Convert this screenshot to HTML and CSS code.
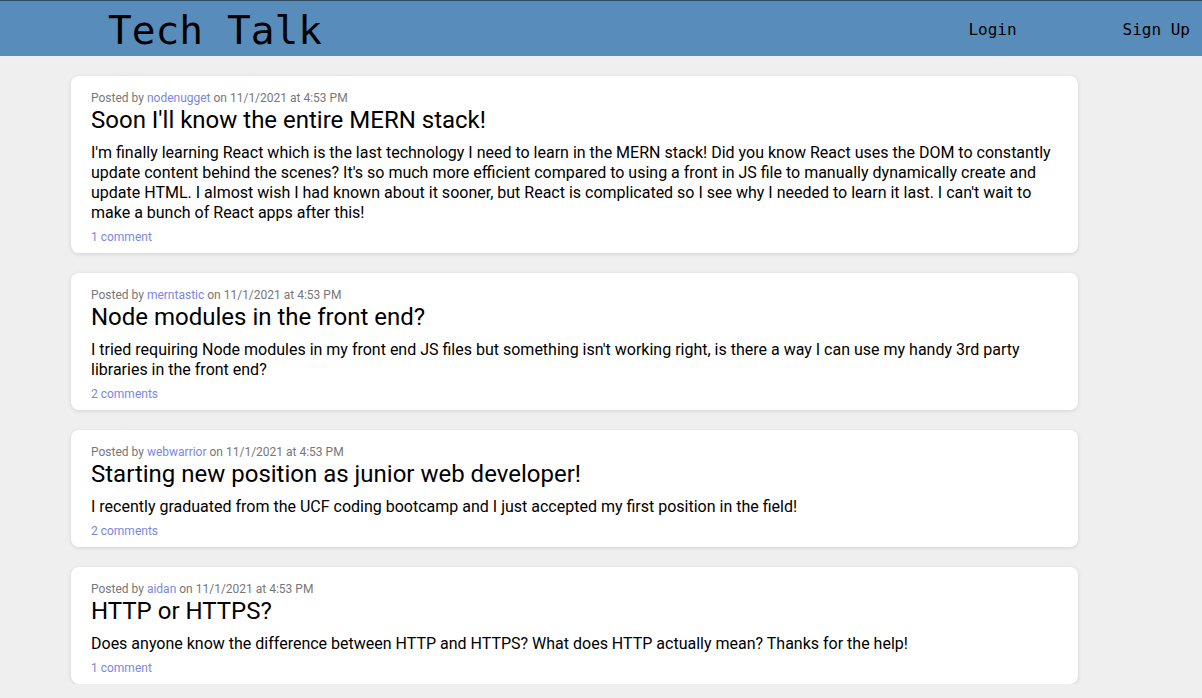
FILE: index.html
```html
<!DOCTYPE html>
<html>
<head>
<meta charset="utf-8">
<link rel="stylesheet" href="styles.css">
</head>
<body>
<header class="topbar">
  <h1 class="brand">Tech Talk</h1>
  <nav class="nav">
    <a class="nav-link" href="#">Login</a>
    <a class="nav-link" href="#">Sign Up</a>
  </nav>
</header>
<main class="feed">
  <article class="card">
    <div class="meta">Posted by <a class="user" href="#">nodenugget</a> on 11/1/2021 at 4:53 PM</div>
    <h2 class="title">Soon I'll know the entire MERN stack!</h2>
    <p class="body">I'm finally learning React which is the last technology I need to learn in the MERN stack! Did you know React uses the DOM to constantly update content behind the scenes? It's so much more efficient compared to using a front in JS file to manually dynamically create and update HTML. I almost wish I had known about it sooner, but React is complicated so I see why I needed to learn it last. I can't wait to make a bunch of React apps after this!</p>
    <a class="comments" href="#">1 comment</a>
  </article>
  <article class="card">
    <div class="meta">Posted by <a class="user" href="#">merntastic</a> on 11/1/2021 at 4:53 PM</div>
    <h2 class="title">Node modules in the front end?</h2>
    <p class="body">I tried requiring Node modules in my front end JS files but something isn't working right, is there a way I can use my handy 3rd party libraries in the front end?</p>
    <a class="comments" href="#">2 comments</a>
  </article>
  <article class="card">
    <div class="meta">Posted by <a class="user" href="#">webwarrior</a> on 11/1/2021 at 4:53 PM</div>
    <h2 class="title">Starting new position as junior web developer!</h2>
    <p class="body">I recently graduated from the UCF coding bootcamp and I just accepted my first position in the field!</p>
    <a class="comments" href="#">2 comments</a>
  </article>
  <article class="card">
    <div class="meta">Posted by <a class="user" href="#">aidan</a> on 11/1/2021 at 4:53 PM</div>
    <h2 class="title">HTTP or HTTPS?</h2>
    <p class="body">Does anyone know the difference between HTTP and HTTPS? What does HTTP actually mean? Thanks for the help!</p>
    <a class="comments" href="#">1 comment</a>
  </article>
</main>
</body>
</html>
```
FILE: styles.css
```css
html, body {
  margin: 0;
  padding: 0;
}
body {
  background: #efefef;
  font-family: Roboto, "Liberation Sans", sans-serif;
  color: #000;
}
.topbar {
  display: flex;
  align-items: center;
  justify-content: space-between;
  height: 55px;
  background: #588cba;
  border-top: 1px solid #2e4b64;
}
.brand {
  margin: 4px 0 0 108px;
  font-family: "DejaVu Sans Mono", monospace;
  font-weight: normal;
  font-size: 39.5px;
  line-height: 51px;
  color: #000;
}
.nav {
  display: flex;
  gap: 106px;
  padding-right: 12px;
  padding-top: 1px;
}
.nav-link {
  font-family: "DejaVu Sans Mono", monospace;
  font-size: 16px;
  color: #000;
  text-decoration: none;
}
.feed {
  display: flex;
  flex-direction: column;
  gap: 20px;
  width: 1007px;
  margin: 20px 0 0 71px;
}
.card {
  background: #fff;
  border-radius: 8px;
  box-shadow: 0 1px 4px rgba(0, 0, 0, 0.12);
  padding: 14px 20px 8px;
}
.meta {
  font-size: 12px;
  line-height: 16px;
  color: #777;
}
.user, .comments {
  color: #7b87e0;
  text-decoration: none;
}
.title {
  margin: 0 0 9px;
  font-size: 24px;
  font-weight: normal;
  line-height: 28px;
}
.body {
  margin: 0 0 6px;
  font-size: 16px;
  line-height: 20px;
}
.comments {
  display: block;
  font-size: 12px;
  line-height: 16px;
}
```
